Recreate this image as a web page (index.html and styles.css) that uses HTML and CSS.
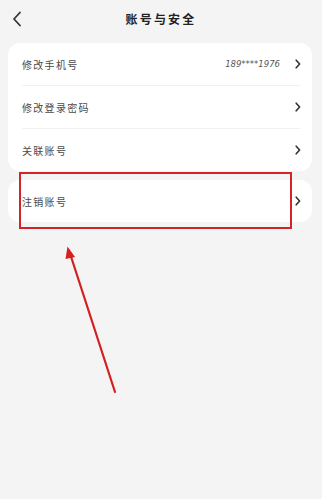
FILE: index.html
```html
<!DOCTYPE html>
<html lang="zh-CN">
<head>
<meta charset="utf-8">
<title>账号与安全</title>
<link rel="stylesheet" href="styles.css">
</head>
<body>
<div class="page">
  <header class="topbar">
    <svg class="back" width="10" height="16" viewBox="0 0 10 16"><polyline points="8,1.5 2,8 8,14.5" fill="none" stroke="#333" stroke-width="1.8" stroke-linecap="round" stroke-linejoin="round"/></svg>
    <h1 class="title">账号与安全</h1>
  </header>

  <section class="card">
    <div class="row">
      <span class="label">修改手机号</span>
      <span class="value">189****1976</span>
      <svg class="chev" width="6" height="10" viewBox="0 0 6 10"><polyline points="1.2,1.2 4.6,5 1.2,8.8" fill="none" stroke="#333" stroke-width="1.6" stroke-linecap="round" stroke-linejoin="round"/></svg>
    </div>
    <div class="divider"></div>
    <div class="row">
      <span class="label">修改登录密码</span>
      <svg class="chev" width="6" height="10" viewBox="0 0 6 10"><polyline points="1.2,1.2 4.6,5 1.2,8.8" fill="none" stroke="#333" stroke-width="1.6" stroke-linecap="round" stroke-linejoin="round"/></svg>
    </div>
    <div class="divider"></div>
    <div class="row">
      <span class="label">关联账号</span>
      <svg class="chev" width="6" height="10" viewBox="0 0 6 10"><polyline points="1.2,1.2 4.6,5 1.2,8.8" fill="none" stroke="#333" stroke-width="1.6" stroke-linecap="round" stroke-linejoin="round"/></svg>
    </div>
  </section>

  <section class="card card-second">
    <div class="row">
      <span class="label">注销账号</span>
      <svg class="chev" width="6" height="10" viewBox="0 0 6 10"><polyline points="1.2,1.2 4.6,5 1.2,8.8" fill="none" stroke="#333" stroke-width="1.6" stroke-linecap="round" stroke-linejoin="round"/></svg>
    </div>
  </section>

  <div class="highlight"></div>
  <svg class="arrow" width="322" height="499" viewBox="0 0 322 499">
    <line x1="115" y1="392" x2="70.5" y2="255" stroke="#d41f1f" stroke-width="2.2" stroke-linecap="round"/>
    <polygon points="67.5,246.5 75,257 65.5,259" fill="#d41f1f"/>
  </svg>
</div>
</body>
</html>
```

FILE: styles.css
```css
html, body {
  margin: 0;
  padding: 0;
  background: #f4f4f4;
}
.page {
  position: relative;
  width: 322px;
  height: 499px;
  overflow: hidden;
  font-family: "Noto Sans CJK SC", "Noto Sans", sans-serif;
  color: #444;
}
.topbar {
  position: relative;
  height: 43px;
  display: flex;
  align-items: center;
  justify-content: center;
}
.back {
  position: absolute;
  left: 12px;
  top: 11px;
}
.title {
  margin: 0 0 6px;
  font-size: 12px;
  font-weight: 700;
  letter-spacing: 2.2px;
  color: #222;
}
.card {
  margin: 0 10px 0 8px;
  background: #fff;
  border-radius: 12px;
}
.card-second {
  margin-top: 9px;
}
.row {
  height: 42px;
  display: flex;
  align-items: center;
  padding: 0 11px 0 14px;
}
.label {
  flex: 1;
  font-size: 10px;
  letter-spacing: 1.3px;
  color: #4a4a4a;
}
.value {
  font-family: "DejaVu Sans", sans-serif;
  font-style: italic;
  font-size: 8.5px;
  color: #555;
  margin-right: 15px;
}
.chev {
  display: block;
}
.divider {
  height: 1px;
  background: #f0f0f0;
  margin: 0 12px 0 14px;
}
.highlight {
  position: absolute;
  left: 19px;
  top: 172px;
  width: 269px;
  height: 53px;
  border: 2px solid #d0262a;
}
.arrow {
  position: absolute;
  left: 0;
  top: 0;
}
```
